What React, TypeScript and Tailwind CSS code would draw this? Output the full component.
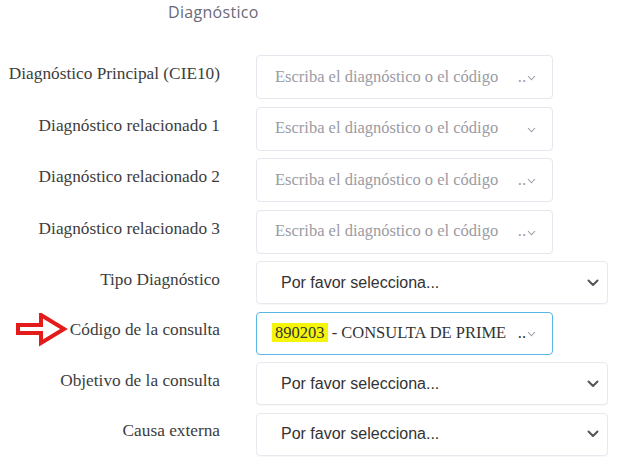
import React from "react";

function ThinChevron() {
  return (
    <svg width="9" height="6" viewBox="0 0 9 6" className="shrink-0">
      <path d="M1 1 L4.5 4.8 L8 1" fill="none" stroke="#9a9aa8" strokeWidth="1.1" />
    </svg>
  );
}

function BoldChevron() {
  return (
    <svg width="12" height="8" viewBox="0 0 12 8" className="shrink-0">
      <path d="M1.5 1.5 L6 6 L10.5 1.5" fill="none" stroke="#555" strokeWidth="2" strokeLinecap="round" strokeLinejoin="round" />
    </svg>
  );
}

function Arrow() {
  return (
    <svg width="56" height="34" viewBox="0 0 56 34" className="absolute left-[16px] top-[1px]">
      <polygon
        points="2,12 25,12 25,2 48,16 25,30 25,20 2,20"
        fill="white"
        stroke="#e31b1b"
        strokeWidth="4"
        strokeLinejoin="miter"
      />
    </svg>
  );
}

function Label({ children }: { children: React.ReactNode }) {
  return (
    <div className="flex justify-end pb-[6px] text-[17.3px] leading-none text-[#3d3d3d] font-['Liberation_Serif','DejaVu_Serif',serif]">
      <span>{children}</span>
    </div>
  );
}

function SearchBox({ text, ellipsis = true }: { text: string; ellipsis?: boolean }) {
  return (
    <div className="w-[297px] h-[44px] rounded-[4px] border border-[#e6e6ee] bg-white flex items-center pl-[18px] pr-[16px] font-['Liberation_Serif','DejaVu_Serif',serif] text-[16.5px] text-[#9b9ba3]">
      <span className="flex-1 whitespace-nowrap">{text}</span>
      {ellipsis && <span className="mr-[1px]">..</span>}
      <span className="mt-[2px]">
        <ThinChevron />
      </span>
    </div>
  );
}

function SelectBox() {
  return (
    <div className="w-[352px] h-[43px] rounded-[4px] border border-[#e8e8ef] shadow-[0_1px_1px_rgba(0,0,0,0.03)] bg-white flex items-center justify-between pl-[24px] pr-[8px]">
      <span className="text-[16px] text-[#333] font-['Liberation_Sans',Arial,sans-serif]">
        Por favor selecciona...
      </span>
      <BoldChevron />
    </div>
  );
}

function CodeBox() {
  return (
    <div className="w-[297px] h-[43px] rounded-[4px] border border-[#5ab6e6] bg-white flex items-center pl-[15px] pr-[16px] font-['Liberation_Serif','DejaVu_Serif',serif] text-[16.5px] text-[#333]">
      <span className="flex-1 whitespace-nowrap">
        <span className="bg-[#f5f50a] px-[3px]">890203</span> - CONSULTA DE PRIME
      </span>
      <span className="mr-[1px]">..</span>
      <span className="mt-[2px]">
        <ThinChevron />
      </span>
    </div>
  );
}

export default function App() {
  const rows: { label: string; field: React.ReactNode; arrow?: boolean }[] = [
    { label: "Diagnóstico Principal (CIE10)", field: <SearchBox text="Escriba el diagnóstico o el código" /> },
    { label: "Diagnóstico relacionado 1", field: <SearchBox text="Escriba el diagnóstico o el código" ellipsis={false} /> },
    { label: "Diagnóstico relacionado 2", field: <SearchBox text="Escriba el diagnóstico o el código" /> },
    { label: "Diagnóstico relacionado 3", field: <SearchBox text="Escriba el diagnóstico o el código" /> },
    { label: "Tipo Diagnóstico", field: <SelectBox /> },
    { label: "Código de la consulta", field: <CodeBox />, arrow: true },
    { label: "Objetivo de la consulta", field: <SelectBox /> },
    { label: "Causa externa", field: <SelectBox /> },
  ];
  return (
    <div className="w-[625px] h-[475px] bg-white overflow-hidden">
      <div className="pt-[2px] pl-[168px] text-[16px] tracking-[0.3px] text-[#6a6a78] leading-[20px] font-['Open_Sans',Lato,sans-serif]">
        Diagnóstico
      </div>
      <div className="mt-[33px] flex flex-col gap-[7.5px]">
        {rows.map((r, i) => (
          <div key={i} className="relative grid grid-cols-[220px_1fr] gap-x-[36px] items-center">
            {r.arrow && <Arrow />}
            <Label>{r.label}</Label>
            <div>{r.field}</div>
          </div>
        ))}
      </div>
    </div>
  );
}
